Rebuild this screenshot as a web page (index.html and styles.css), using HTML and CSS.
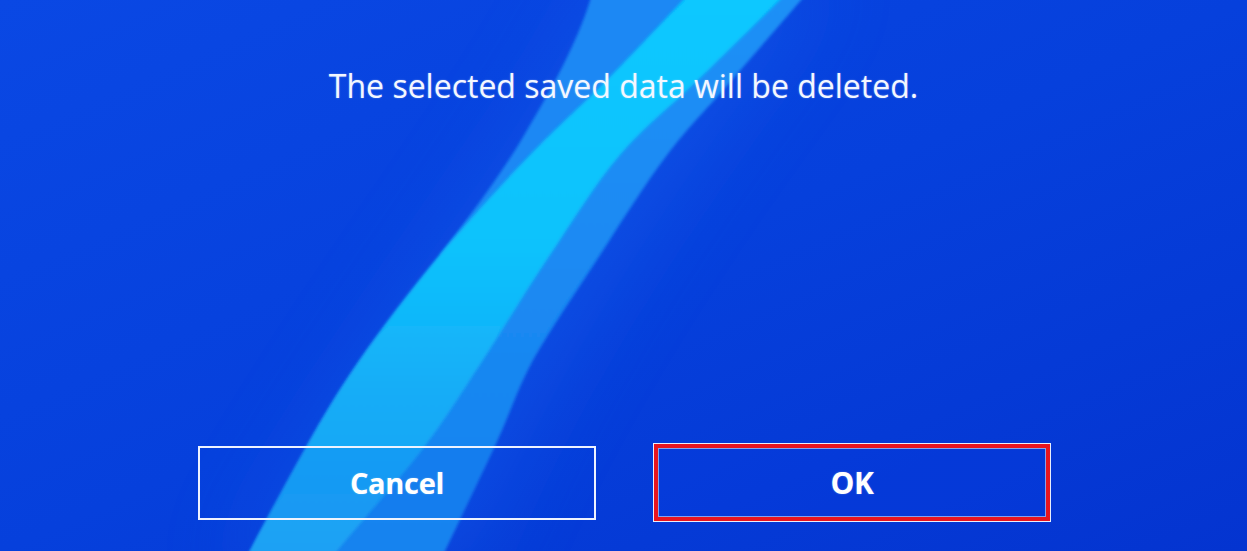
FILE: index.html
```html
<!DOCTYPE html>
<html>
<head>
<meta charset="utf-8">
<link rel="stylesheet" href="styles.css">
</head>
<body>
<div class="screen">
  <svg class="backdrop" viewBox="0 0 1247 551" preserveAspectRatio="none" aria-hidden="true">
    <defs>
      <linearGradient id="base" x1="0" y1="0" x2="1" y2="1">
        <stop offset="0" stop-color="#0a48e4"/>
        <stop offset="0.5" stop-color="#0640dc"/>
        <stop offset="1" stop-color="#0434d0"/>
      </linearGradient>
      <linearGradient id="cyan" x1="0" y1="0" x2="0" y2="1">
        <stop offset="0" stop-color="#06c8ff"/>
        <stop offset="0.45" stop-color="#0cc2fc"/>
        <stop offset="0.7" stop-color="#16acf7"/>
        <stop offset="1" stop-color="#1c9ff3"/>
      </linearGradient>
      <linearGradient id="mid" x1="0" y1="0" x2="0" y2="1">
        <stop offset="0" stop-color="#1b90f6"/>
        <stop offset="1" stop-color="#1882ef"/>
      </linearGradient>
      <filter id="b40" x="-50%" y="-50%" width="200%" height="200%"><feGaussianBlur stdDeviation="40"/></filter>
      <filter id="b2" x="-50%" y="-50%" width="200%" height="200%"><feGaussianBlur stdDeviation="1.8"/></filter>
    </defs>
    <rect width="1247" height="551" fill="url(#base)"/>
    <!-- faint glow around the ribbon -->
    <path d="M600 -20 C 540 120, 360 330, 230 571 L 470 571 C 560 340, 720 130, 830 -20 Z" fill="#1a66ee" opacity="0.35" filter="url(#b40)"/>
    <!-- left medium stripe merging into the ribbon -->
    <path d="M595 -20 C 588 20, 560 75, 530 125 C 505 170, 470 215, 440 255 L 550 255 C 573 221, 595 184, 620 155 C 645 126, 668 109, 698 80 C 728 51, 783 -3, 800 -20 Z" fill="#1a88f4" filter="url(#b2)"/>
    <!-- whole ribbon, medium tone -->
    <path d="M702 -20 C 686 -3, 636 51, 607 80 C 578 109, 558 126, 530 155 C 502 184, 468 221, 440 255 C 412 289, 382 328, 360 360 C 338 392, 325 414, 307 446 C 289 478, 261 530, 250 551 L 240 575 L 435 575 L 445 551 C 455 530, 480 478, 495 446 C 510 414, 516 392, 533 360 C 551 328, 578 289, 600 255 C 622 221, 645 184, 667 155 C 689 126, 707 109, 732 80 C 757 51, 804 -3, 818 -20 Z" fill="url(#mid)" filter="url(#b2)"/>
    <!-- bright cyan part of the ribbon -->
    <path d="M702 -20 C 686 -3, 636 51, 607 80 C 578 109, 558 126, 530 155 C 502 184, 468 221, 440 255 C 412 289, 382 328, 360 360 C 338 392, 325 414, 307 446 C 289 478, 261 530, 250 551 L 240 575 L 322 575 L 337 551 C 354 530, 401 478, 425 446 C 449 414, 462 392, 483 360 C 504 328, 527 289, 550 255 C 573 221, 595 184, 620 155 C 645 126, 668 109, 698 80 C 728 51, 783 -3, 800 -20 Z" fill="url(#cyan)" filter="url(#b2)"/>
  </svg>
  <div class="content">
    <p class="message">The selected saved data will be deleted.</p>
    <div class="actions">
      <div class="btn btn-cancel">Cancel</div>
      <div class="btn btn-ok">OK</div>
    </div>
  </div>
</div>
</body>
</html>
```

FILE: styles.css
```css
html, body {
  margin: 0;
  padding: 0;
  background: #0640dc;
}
.screen {
  position: relative;
  width: 1247px;
  height: 551px;
  overflow: hidden;
  font-family: "Open Sans", "Noto Sans", sans-serif;
  color: #f4f7ff;
}
.backdrop {
  position: absolute;
  inset: 0;
  width: 100%;
  height: 100%;
  display: block;
}
.content {
  position: relative;
  height: 100%;
  display: flex;
  flex-direction: column;
}
.message {
  margin: 0;
  padding-top: 66px;
  text-align: center;
  font-size: 32px;
  letter-spacing: 0;
  line-height: 40px;
  text-shadow: 0 0 2px rgba(255,255,255,0.35);
}
.actions {
  margin-top: auto;
  padding: 0 0 30px 198px;
  display: flex;
  align-items: center;
  gap: 58px;
}
.btn {
  box-sizing: border-box;
  display: flex;
  align-items: center;
  justify-content: center;
  font-weight: 700;
  font-size: 29px;
  letter-spacing: -0.3px;
  color: #ffffff;
  text-shadow: 0 0 2px rgba(255,255,255,0.3);
}
.btn-cancel {
  width: 398px;
  height: 74px;
  border: 2px solid #eef3ff;
  background: rgba(10, 70, 230, 0.12);
}
.btn-ok {
  width: 396px;
  height: 77px;
  border: 4px solid #e8151f;
  box-shadow: 0 0 0 1px #e9eefc, inset 0 0 0 1px rgba(190, 205, 245, 0.7);
  background: rgba(8, 60, 225, 0.3);
  font-size: 30px;
}
```
